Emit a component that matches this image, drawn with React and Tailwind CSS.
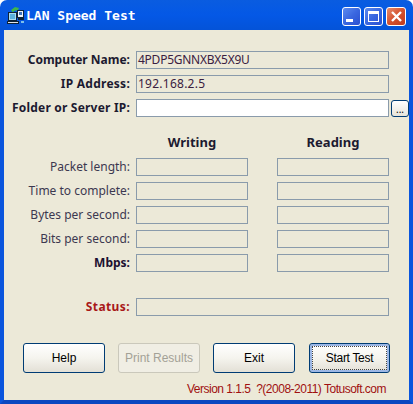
const readout = "h-[18px] border border-[#8a9bab] bg-[#ece9d8]";

function Label({ children, className = "" }) {
  return <div className={`w-[126px] shrink-0 whitespace-nowrap text-right text-[12px] leading-[14px] ${className}`}>{children}</div>;
}

function InfoRow({ label, value, white, labelClass = "", valueClass = "" }) {
  return (
    <div className="flex h-[18px] items-center">
      <Label className={`font-bold text-[#1c1a30] ${labelClass}`}>{label}</Label>
      <div className={`${readout} ml-[6px] flex w-[253px] shrink-0 items-center pl-[1px] text-[12px] text-[#3a2040] ${valueClass} ${white ? "bg-white" : ""}`}>{value}</div>
      {white && (
        <button className="ml-[2px] flex h-[17px] w-[18px] shrink-0 items-end justify-center rounded-[3px] border border-[#003c74] bg-gradient-to-b from-white to-[#e6e4da] text-[10px] leading-[13px] text-black">
          ...
        </button>
      )}
    </div>
  );
}

function StatRow({ label, bold }) {
  return (
    <div className="flex h-[18px] items-center gap-[6px]">
      <Label className={bold ? "font-bold text-[#1c1030]" : "text-[#3c3850]"}>{label}</Label>
      <div className={`${readout} w-[112px]`} />
      <div className={`${readout} ml-[23px] w-[112px]`} />
    </div>
  );
}

function ActionButton({ children, disabled, focused }) {
  return (
    <button
      className={`flex h-[30px] items-center justify-center rounded-[3px] border text-[12px] ${
        disabled
          ? "border-[#cac8bb] bg-[#f0eee4] text-[#a3a196]"
          : "border-[#003c74] bg-gradient-to-b from-white via-[#f5f4ee] to-[#e3e0d6] text-black"
      } ${focused ? "w-[81px] p-[2px] shadow-[inset_0_0_0_2px_#9db8e6]" : "w-[82px]"}`}
      style={{ fontFamily: "'Liberation Sans', sans-serif" }}
    >
      {focused ? (
        <span className="flex h-full w-full items-center justify-center border border-dotted border-[#444] tracking-[-0.3px]">{children}</span>
      ) : (
        children
      )}
    </button>
  );
}

function TitleIcon() {
  return (
    <svg width="18" height="18" viewBox="0 0 18 18" className="shrink-0">
      <path d="M4 3 L8 0 L12 1 L11 3 L7 4 L6 6 Z" fill="#3fb54a" />
      <rect x="1.5" y="5.5" width="8" height="8" fill="#a8dcf0" stroke="#0d2238" />
      <rect x="3" y="7" width="5" height="5" fill="#5ab0dc" />
      <rect x="10.5" y="3.5" width="6" height="7" fill="#eef3f8" stroke="#0d2238" />
      <rect x="12" y="5" width="3" height="3" fill="#3f74bc" />
      <rect x="0.5" y="14.5" width="11" height="2" fill="#dfe3e8" stroke="#0d2238" />
      <rect x="11" y="11" width="6" height="2" fill="#0d2238" />
      <rect x="14" y="14" width="3" height="2" fill="#7fc0e8" />
    </svg>
  );
}

function WindowButton({ kind }) {
  const close = kind === "close";
  return (
    <div
      className={`flex h-[19px] items-center justify-center rounded-[3px] border border-white ${
        close ? "w-[20px] bg-gradient-to-br from-[#e58c6d] via-[#d4512e] to-[#c23a1c]" : "w-[19px] bg-gradient-to-br from-[#5d8bef] via-[#3a67e0] to-[#2a4fd0]"
      }`}
    >
      {kind === "min" && <div className="mt-[8px] mr-[5px] h-[3px] w-[7px] bg-white" />}
      {kind === "max" && <div className="h-[11px] w-[11px] border border-t-[3px] border-white" />}
      {close && (
        <svg width="13" height="13" viewBox="0 0 13 13">
          <path d="M2 2 L11 11 M11 2 L2 11" stroke="white" strokeWidth="2.4" />
        </svg>
      )}
    </div>
  );
}

export default function App() {
  return (
    <div className="flex h-[404px] w-[413px] flex-col overflow-hidden" style={{ fontFamily: "'Noto Sans', sans-serif" }}>
      <div className="flex h-[30px] shrink-0 items-center justify-between rounded-t-[7px] bg-gradient-to-b from-[#0a5ce0] via-[#0458e6] to-[#0453d8] pl-[7px] pr-[7px]">
        <div className="mt-[2px] flex items-center gap-[1px]">
          <TitleIcon />
          <span className="text-[13px] font-bold text-white" style={{ fontFamily: "'DejaVu Sans Mono', monospace" }}>LAN Speed Test</span>
        </div>
        <div className="mt-[3px] flex gap-[3px]">
          <WindowButton kind="min" />
          <WindowButton kind="max" />
          <WindowButton kind="close" />
        </div>
      </div>

      <div className="flex flex-1 flex-col border-x-4 border-b-4 border-x-[#0a55dd] border-b-[#0a47c0] bg-[#ece9d8] pt-[21px]">
        <div className="flex flex-col gap-[6px]">
          <InfoRow label="Computer Name:" value="4PDP5GNNXBX5X9U" valueClass="tracking-[-0.25px]" />
          <InfoRow label="IP Address:" value="192.168.2.5" labelClass="tracking-[0.25px]" valueClass="tracking-[0.25px]" />
          <InfoRow label="Folder or Server IP:" labelClass="tracking-[0.2px]" white />
        </div>

        <div className="mt-[17px] flex h-[16px] text-[13px] font-bold leading-[16px] text-[#1c1a30]">
          <div className="ml-[132px] w-[112px] text-center">Writing</div>
          <div className="ml-[29px] w-[112px] text-center">Reading</div>
        </div>

        <div className="mt-[8px] flex flex-col gap-[6px]">
          <StatRow label="Packet length:" />
          <StatRow label="Time to complete:" />
          <StatRow label="Bytes per second:" />
          <StatRow label="Bits per second:" />
          <StatRow label="Mbps:" bold />
        </div>

        <div className="mt-[26px] flex h-[18px] items-center gap-[6px]">
          <Label className="font-bold tracking-[0.4px] text-[#a81818]">Status:</Label>
          <div className={`${readout} w-[253px]`} />
        </div>

        <div className="ml-[19px] mt-[27px] flex gap-[13px]">
          <ActionButton>Help</ActionButton>
          <ActionButton disabled>Print Results</ActionButton>
          <ActionButton>Exit</ActionButton>
          <div className="ml-[1px]">
            <ActionButton focused>Start Test</ActionButton>
          </div>
        </div>

        <div className="mr-[23px] mt-[9px] text-right text-[12px] leading-[14px] tracking-[-0.5px] text-[#a01010]" style={{ fontFamily: "'Liberation Sans', sans-serif" }}>
          Version 1.1.5&nbsp; ?(2008-2011) Totusoft.com
        </div>
      </div>
    </div>
  );
}
